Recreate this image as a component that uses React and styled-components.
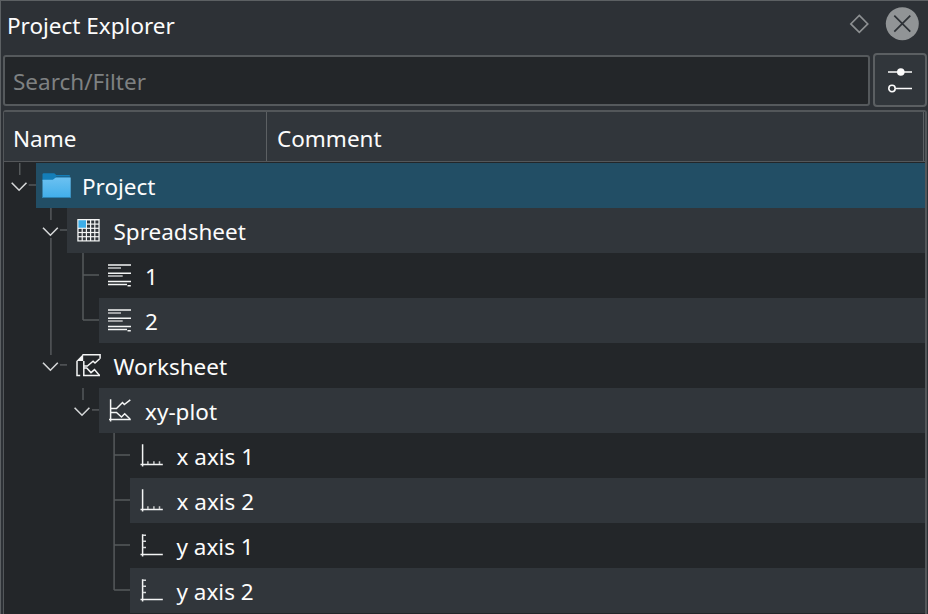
import React from 'react';
import styled, { createGlobalStyle } from 'styled-components';

const GlobalStyle = createGlobalStyle`
  * { box-sizing: border-box; }
  html, body { margin: 0; background: #2a2e32; }
  body {
    font-family: "Noto Sans", sans-serif;
    font-size: 22.5px;
    color: #fcfcfc;
    overflow: hidden;
  }
`;

const Dock = styled.div`
  width: 928px;
  height: 614px;
  display: flex;
  flex-direction: column;
  background: #2d3136;
  border-top: 1px solid #5c6063;
  border-left: 1px solid #5c6063;
  overflow: hidden;
`;

const TitleBar = styled.header`
  height: 52px;
  flex: none;
  display: flex;
  align-items: center;
  padding: 0 9px 6px 6px;
`;

const Title = styled.h1`
  margin: 4px auto 0 0;
  font-size: inherit;
  font-weight: 400;
  line-height: 30px;
`;

const TitleButton = styled.button`
  display: flex;
  padding: 0;
  border: 0;
  background: none;
  margin-left: ${(p) => p.$gap || 0}px;
`;

const FilterBar = styled.div`
  height: 54px;
  flex: none;
  display: flex;
  align-items: center;
  padding-left: 2px;
  gap: 3px;
`;

const SearchField = styled.input`
  width: 867px;
  height: 51px;
  padding: 2px 8px 0;
  border: 2px solid #55595c;
  border-radius: 3px;
  background: #232629;
  color: #fcfcfc;
  font: inherit;
  outline: none;
  &::placeholder { color: #7e8182; opacity: 1; }
`;

const OptionsButton = styled.button`
  width: 54px;
  height: 54px;
  padding: 0 1px 0 0;
  display: flex;
  align-items: center;
  justify-content: center;
  border: 2px solid #5b5f62;
  border-radius: 4px;
  background: #31363b;
`;

const Tree = styled.div`
  flex: 1;
  margin: 3px 1px 0 2px;
  border: 2px solid #53575a;
  border-left-width: 1px;
  border-bottom: 0;
  border-radius: 3px 3px 0 0;
  background: #232629;
  overflow: hidden;
`;

const HeaderRow = styled.div`
  display: flex;
  height: 50px;
  background: #31363b;
  border-bottom: 1px solid #54575a;
  margin-bottom: 1px;
`;

const HeaderCell = styled.div`
  width: ${(p) => p.$width}px;
  padding: 4px 0 0 ${(p) => p.$pad}px;
  line-height: 46px;
  border-right: 1px solid #5c6063;
`;

const Row = styled.div`
  display: flex;
  height: 45px;
`;

const Cell = styled.div`
  flex: 1;
  display: flex;
  align-items: center;
  padding-left: ${(p) => (p.$odd ? 5 : 4)}px;
  background: ${(p) => (p.$selected ? '#224e65' : p.$alt ? '#31363b' : '#232629')};
`;

const Label = styled.span`
  margin: 3px 0 0 ${(p) => (p.$odd ? 9.5 : 10)}px;
  line-height: 30px;
  white-space: pre;
`;

const Glyph = styled.svg`
  flex: none;
  display: block;
`;

const RowGlyph = styled(Glyph)`
  margin-bottom: 1px;
`;

const GUTTERS = [32, 63, 95, 126];
const STEMS = [15.75, 46.9, 79, 110.1];
const ARROWS = [15.1, 46.4, 78, 109.4];

/* Tree lines and the expander arrow in front of one row. */
function Branch({ level, open, below, through = [] }) {
  const w = GUTTERS[level];
  const x = STEMS[level];
  const a = ARROWS[level];
  return (
    <Glyph width={w} height="45" fill="none" stroke="#55595b" strokeWidth="1.5">
      {through.map((l) => <path key={l} d={`M${STEMS[l]} 0V45`} />)}
      {open ? (
        <>
          <path d={`M${x} 0V12`} />
          {below && <path d={`M${x} 30V45`} />}
          <path d={`M${x + 9} 21.9H${w}`} />
          <path d={`M${a - 7.4} 19.8L${a} 27.2L${a + 7.4} 19.8`} stroke="#d5d7d8" strokeWidth="1.6" />
        </>
      ) : (
        <path d={`M${x} 0V${below ? 45 : 22}M${x} 21.9H${w}`} />
      )}
    </Glyph>
  );
}

const Icon = ({ children }) => (
  <RowGlyph width="32" height="32" viewBox="0 0 32 32" fill="none" stroke="#f4f5f5" strokeWidth="1.5">
    {children}
  </RowGlyph>
);

const FolderIcon = () => (
  <Icon>
    <defs>
      <linearGradient id="folder" x1="0" y1="0" x2="0" y2="1">
        <stop offset="0" stopColor="#6cc1f1" />
        <stop offset="1" stopColor="#40aeea" />
      </linearGradient>
    </defs>
    <g stroke="none">
      <path d="M3.3 4.2H14.3L16.3 6H29.8V12H2.5V5z" fill="#147eb8" />
      <path d="M16.5 7.3H29.8V8.5H15z" fill="#1b5f86" />
      <path d="M2.5 10.8H12.8L15.8 8.5H30.7V29H2.5z" fill="url(#folder)" />
      <path d="M2.5 28H30.7V29H2.5z" fill="#2c82b2" />
    </g>
  </Icon>
);

const SheetIcon = () => (
  <Icon>
    <path d="M5.3 5H27.7V27.6H5.3z" fill="#f4f5f5" stroke="none" />
    <g fill="#31363b" stroke="none">
      {[0, 1, 2, 3, 4].map((r) => [0, 1, 2, 3, 4].map((c) =>
        r < 2 && c < 2 ? null : (
          <rect key={`${r}${c}`} x={6.6 + c * 4.2} y={6.5 + r * 4.2} width="3" height="3" />
        )
      ))}
    </g>
    <path d="M6.4 6.2H14V13.8H6.4z" fill="#3daee9" stroke="none" />
  </Icon>
);

const ColumnIcon = () => (
  <Icon>
    <path d="M5 5.9H28M5 14.2H28M5 22.5H28" />
    <path d="M5 8.9H18M5 17H19.7" stroke="#c6c8c9" />
    <path d="M5 25.4H24M24.5 26.8H27.8" />
  </Icon>
);

const WorksheetIcon = () => (
  <Icon>
    <path d="M5 12V26.6H8.2M10.5 5.7H28.1V9.8" />
    <path d="M4.4 12L11.2 5V12z" fill="#f4f5f5" stroke="none" />
    <path d="M11.8 12V27.3M11 26.6H28" />
    <path d="M12 17H15.3L21.1 12.2L23 14L27.7 9.7M12 19H14.7L19 23.6L22.5 20.6L27.5 26.5" />
  </Icon>
);

const PlotIcon = () => (
  <Icon>
    <path d="M7.6 5.3V27.6M6 25.6H27.8" />
    <path d="M7.7 14.5H13.5L19.5 8.5L21.3 10.5L27.3 5.8M7.7 18.4H13.5L18.5 23L21.7 19.7L27 25" />
  </Icon>
);

const XAxisIcon = () => (
  <Icon>
    <path d="M7.6 5.3V27.6M5.5 25.6H27.8" />
    <path d="M12.9 22.3V25M18.9 22.3V25M24.5 22.3V25" stroke="#c6c8c9" />
  </Icon>
);

const YAxisIcon = () => (
  <Icon>
    <path d="M7.6 5.3V27.6M5.5 25.6H27.8" />
    <path d="M7.7 6.2H11M7.7 12.3H11M7.7 18.6H11" stroke="#d8dadb" />
  </Icon>
);

const ROWS = [
  { label: 'Project', icon: FolderIcon, level: 0, open: true, selected: true },
  { label: 'Spreadsheet', icon: SheetIcon, level: 1, open: true, below: true },
  { label: '1', icon: ColumnIcon, level: 2, below: true, through: [1] },
  { label: '2', icon: ColumnIcon, level: 2, through: [1] },
  { label: 'Worksheet', icon: WorksheetIcon, level: 1, open: true },
  { label: 'xy-plot', icon: PlotIcon, level: 2, open: true },
  { label: 'x axis 1', icon: XAxisIcon, level: 3, below: true },
  { label: 'x axis 2', icon: XAxisIcon, level: 3, below: true },
  { label: 'y axis 1', icon: YAxisIcon, level: 3, below: true },
  { label: 'y axis 2', icon: YAxisIcon, level: 3 },
];

export default function App() {
  return (
    <>
      <GlobalStyle />
      <Dock>
        <TitleBar>
          <Title>Project Explorer</Title>
          <TitleButton aria-label="Float">
            <Glyph width="20" height="20" fill="none" stroke="#8d9092" strokeWidth="1.6">
              <path d="M10.3 1.4L18.8 9.9L10.3 18.4L1.8 9.9z" />
            </Glyph>
          </TitleButton>
          <TitleButton aria-label="Close" $gap={16}>
            <Glyph width="34" height="34" fill="none">
              <circle cx="17.3" cy="16.7" r="16.5" fill="#919496" />
              <path d="M9.3 8.7L25.3 24.7M25.3 8.7L9.3 24.7" stroke="#2d3136" strokeWidth="1.7" />
            </Glyph>
          </TitleButton>
        </TitleBar>
        <FilterBar>
          <SearchField placeholder="Search/Filter" />
          <OptionsButton aria-label="Filter options">
            <Glyph width="26" height="26" fill="none" stroke="#fcfcfc" strokeWidth="1.6">
              <path d="M1 5H25M9 21.5H25" />
              <circle cx="13.8" cy="5" r="3.8" fill="#fcfcfc" stroke="none" />
              <circle cx="5" cy="21.5" r="3.2" />
            </Glyph>
          </OptionsButton>
        </FilterBar>
        <Tree>
          <HeaderRow>
            <HeaderCell $width={263} $pad={9}>Name</HeaderCell>
            <HeaderCell $width={657} $pad={10}>Comment</HeaderCell>
          </HeaderRow>
          {ROWS.map(({ label, icon: RowIcon, selected, ...branch }, i) => {
            const odd = branch.level % 2 === 1;
            return (
              <Row key={label}>
                <Branch {...branch} />
                <Cell $selected={selected} $alt={i % 2 === 1} $odd={odd}>
                  <RowIcon />
                  <Label $odd={odd}>{label}</Label>
                </Cell>
              </Row>
            );
          })}
        </Tree>
      </Dock>
    </>
  );
}
